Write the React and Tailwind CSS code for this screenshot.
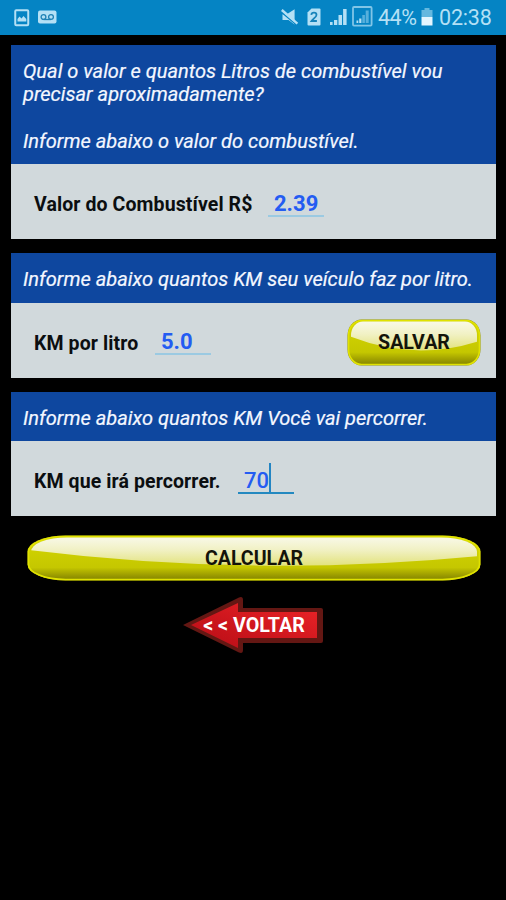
function StatusBar() {
  return (
    <header className="flex h-[35px] shrink-0 items-center bg-[#0584c4] pl-[14px] pr-[14px] text-[#b4e0f5]">
      <svg className="h-[18px] w-[16px]" viewBox="0 0 16 18">
        <rect x="1.25" y="1.25" width="13" height="15" rx="1" fill="none" stroke="#b4e0f5" strokeWidth="2" />
        <path d="M3.5 12.5V10l2-2.5 2 2 2-2.5 2.8 3v2.5z" fill="#b4e0f5" />
      </svg>
      <svg className="-mt-[2px] ml-[8px] h-[14px] w-[19px]" viewBox="0 0 19 14">
        <rect x="0" y="0.5" width="18.5" height="13" rx="2" fill="#b4e0f5" />
        <path d="M5.5 9.5h7.5" stroke="#2082b5" strokeWidth="1.3" />
        <circle cx="5.5" cy="7" r="2.4" fill="none" stroke="#2082b5" strokeWidth="1.3" />
        <circle cx="13" cy="7" r="2.4" fill="none" stroke="#2082b5" strokeWidth="1.3" />
      </svg>
      <div className="flex-1" />
      <svg className="-mt-[1px] h-[18px] w-[18px]" viewBox="0 0 18 18">
        <path d="M1.5 6.3h4.3L13.6 1.2v15.3L7.5 12H1.5z" fill="#b4e0f5" />
        <path d="M0.3 4L16 17.2" stroke="#0584c4" strokeWidth="1.6" />
        <path d="M0.8 2L16.4 15.6" stroke="#b4e0f5" strokeWidth="2.4" />
      </svg>
      <svg className="-mt-[1px] ml-[8px] h-[18px] w-[14px]" viewBox="0 0 14 18">
        <path d="M4.5 0.5H12.5a1 1 0 0 1 1 1v15a1 1 0 0 1-1 1H1.5a1 1 0 0 1-1-1V4.5z" fill="#b4e0f5" />
        <path d="M4.3 6.8c.3-3 5.2-3 5.2.1 0 2-3 3.5-5 6.1h5.4" fill="none" stroke="#1683ba" strokeWidth="1.8" />
      </svg>
      <svg className="-mt-[1px] ml-[9px] h-[18px] w-[17px]" viewBox="0 0 17 18">
        <path d="M0 14h2.6v3H0zM4 12h3.3v5H4zM8.5 7h3.5v10H8.5zM13.1 1h3.5v16h-3.5z" fill="#b4e0f5" />
      </svg>
      <svg className="-mt-[2px] ml-[5px] h-[21px] w-[21px]" viewBox="0 0 21 21">
        <rect x="1" y="1" width="18.6" height="18.6" rx="1" fill="none" stroke="#80c5e7" strokeWidth="1.8" />
        <path d="M4.5 14.5h1.8V17H4.5zM7.2 12.5h2.2V17H7.2z" fill="#b4e0f5" />
        <path d="M10.3 9h2.6v8h-2.6zM13.7 4.5h3V17h-3z" fill="#57b0dc" />
      </svg>
      <span className="ml-[5px] mt-[1px] w-[39px] whitespace-nowrap text-[21.5px] tracking-[-0.5px]">44%</span>
      <svg className="-mt-[1px] ml-[4px] h-[18px] w-[12px]" viewBox="0 0 12 18">
        <path d="M3.5 0h5v2h3v7H0.5V2h3z" fill="#65b8df" />
        <path d="M0.5 9h11v8.5H0.5z" fill="#e4f6ff" />
      </svg>
      <span className="ml-[6px] mt-[1px] w-[53px] whitespace-nowrap text-[21.5px] tracking-[-0.2px]">02:38</span>
    </header>
  );
}

function Heading({ children }) {
  return (
    <p className="whitespace-nowrap bg-[#0e479f] pb-[11.3px] pl-[12px] pt-[15px] text-[20.05px] italic leading-[23.2px] text-[#f4f7ff] [-webkit-text-stroke:0.2px_#f4f7ff]">
      {children}
    </p>
  );
}

function Field({ label, value, focused = false, labelWidth, children }) {
  return (
    <div className="flex h-[75px] items-center bg-[#d1d9dc] pl-[23px] pr-[15px] pt-[5px]">
      <span className={`${labelWidth} mt-[2px] shrink-0 whitespace-nowrap text-[19.5px] font-bold tracking-[0.1px] text-[#0b0e10]`}>
        {label}
      </span>
      <div
        className={`-mt-[6px] flex h-[31px] w-[56px] items-end border-b-2 pl-[6px] text-[22px] leading-[26px] ${
          focused ? "border-[#2389c0] font-medium" : "border-[#9bcae2] font-bold"
        } text-[#245cf2]`}
      >
        <span className="relative top-[2px]">{value}</span>
        {focused && <span className="h-[29px] w-[2px] bg-[#2385c3]" />}
      </div>
      {children}
    </div>
  );
}

function GlossButton({ id, width, height, rx, shine, edge, className, children }) {
  return (
    <button className={`relative flex shrink-0 items-center justify-center ${className}`}>
      <svg className="absolute inset-0 h-full w-full" viewBox={`0 0 ${width} ${height}`}>
        <defs>
          <linearGradient id={`${id}-body`} x1="0" y1="0" x2="0" y2="1">
            <stop offset="0" stopColor="#d4d600" />
            <stop offset="0.72" stopColor="#c5c700" />
            <stop offset="0.86" stopColor="#a5a500" />
            <stop offset="1" stopColor="#858500" />
          </linearGradient>
          <linearGradient id={`${id}-shine`} x1="0" y1="0" x2="0" y2="1">
            <stop offset="0" stopColor="#f9f9e9" />
            <stop offset="0.45" stopColor="#f1f1c4" />
            <stop offset="1" stopColor="#e2e27c" />
          </linearGradient>
          <clipPath id={`${id}-clip`}>
            <rect x="4" y="2.5" width={width - 8} height={height - 5} rx={rx - 2} ry="14" />
          </clipPath>
        </defs>
        <rect x="0.5" y="0.5" width={width - 1} height={height - 1} rx={rx} ry="16" fill={edge} />
        <rect x="1.5" y="1.5" width={width - 3} height={height - 3} rx={rx - 1} ry="15" fill={`url(#${id}-body)`} stroke="#e0e200" strokeWidth="1.6" />
        <path d={shine} fill={`url(#${id}-shine)`} clipPath={`url(#${id}-clip)`} />
      </svg>
      <span className="relative text-[19.6px] font-bold text-[#14140a]">{children}</span>
    </button>
  );
}

export default function App() {
  return (
    <div className="flex h-[900px] w-[506px] flex-col overflow-hidden bg-black font-['Roboto',sans-serif]">
      <StatusBar />
      <main className="flex flex-col pl-[11px] pr-[10px] pt-[10px]">
        <section>
          <Heading>
            Qual o valor e quantos Litros de combustível vou
            <br />
            precisar aproximadamente?
            <br />
            <br />
            Informe abaixo o valor do combustível.
          </Heading>
          <Field label="Valor do Combustível R$" value="2.39" labelWidth="w-[234px]" />
        </section>
        <section className="mt-[14px]">
          <Heading>Informe abaixo quantos KM seu veículo faz por litro.</Heading>
          <Field label="KM por litro" value="5.0" labelWidth="w-[121px]">
            <GlossButton
              id="save"
              width={134}
              height={47}
              rx={14}
              shine="M2 17V2h130v20Q67 43 2 17z"
              edge="#84862c"
              className="ml-auto h-[47px] w-[134px]"
            >
              SALVAR
            </GlossButton>
          </Field>
        </section>
        <section className="mt-[14px]">
          <Heading>Informe abaixo quantos KM Você vai percorrer.</Heading>
          <Field label="KM que irá percorrer." value="70" focused labelWidth="w-[204px]" />
        </section>
        <GlossButton
          id="calc"
          width={454}
          height={46}
          rx={38}
          shine="M2 15V2h450v19Q226 43 2 15z"
          edge="#d0d200"
          className="ml-[16px] mt-[18.5px] h-[46px] w-[454px] pt-[2px]"
        >
          CALCULAR
        </GlossButton>
        <button className="relative ml-[171px] mt-[15px] flex h-[58px] w-[144px] items-center justify-center">
          <svg className="absolute inset-0 h-full w-full" viewBox="0 0 144 58">
            <defs>
              <linearGradient id="arrow" x1="0" y1="1" x2="1" y2="0">
                <stop offset="0" stopColor="#b80d17" />
                <stop offset="0.4" stopColor="#cb151c" />
                <stop offset="1" stopColor="#ec2428" />
              </linearGradient>
            </defs>
            <path d="M1 29L57 1.5Q61 0 61 4v8h78q2 0 2 2v31q0 2-2 2H61v7q0 4-4 2.500z" fill="#641713" />
            <path d="M9 29L56 7v9h79v26H56v10z" fill="url(#arrow)" />
          </svg>
          <span className="relative mt-[3px] whitespace-nowrap text-[19.7px] font-bold text-white">&lt; &lt; VOLTAR</span>
        </button>
      </main>
    </div>
  );
}
